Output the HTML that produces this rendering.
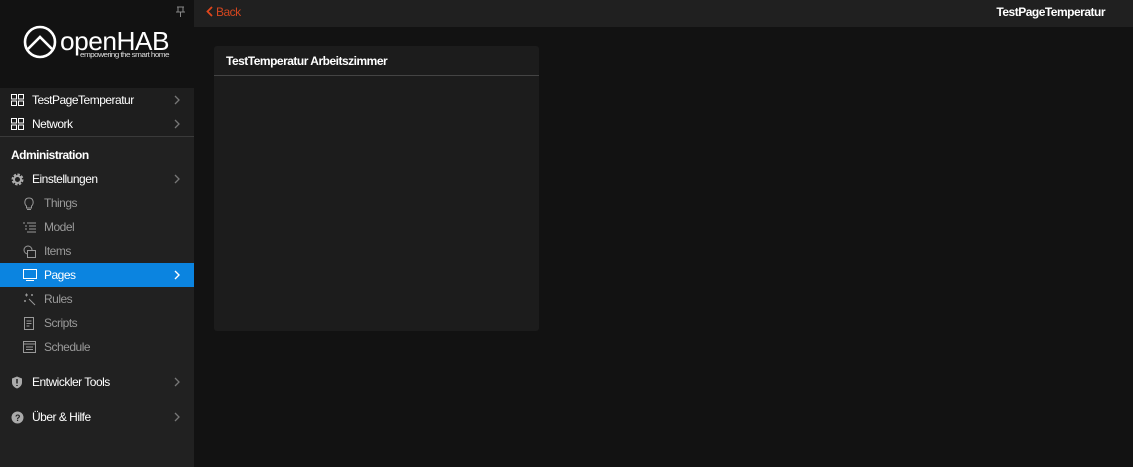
<!DOCTYPE html>
<html><head><meta charset="utf-8"><style>
*{margin:0;padding:0;box-sizing:border-box}
body{width:1133px;height:467px;background:#121212;font-family:"Liberation Sans",sans-serif;font-size:12px;color:#fff;position:relative;overflow:hidden;letter-spacing:-0.5px}
#side{position:absolute;left:0;top:0;width:194px;height:467px;background:#212121}
#logo{position:absolute;left:0;top:0;width:194px;height:88px;background:#121212}
.row{position:absolute;left:0;width:194px;height:24px;line-height:24px}
.row .t{position:absolute;left:32px;top:0}
.row .ic{position:absolute;left:11px;top:6px}
.sub .t{left:44px;color:#9a9a9a}
.sub .ic{left:23px}
.chev{position:absolute;left:174px;top:7px}
.line{position:absolute;left:0;width:194px;height:1px;background:#3a3a3a}
#nav{position:absolute;left:194px;top:0;width:939px;height:27px;background:#202020}
#card{position:absolute;left:214px;top:46px;width:325px;height:285px;background:#1c1c1c;border-radius:3px}
#card .h{height:30px;line-height:30px;padding-left:12px;font-weight:bold;font-size:12px;border-bottom:1px solid #444}
</style></head><body>
<div id="side">
<div id="logo">
<svg style="position:absolute;left:0;top:0" width="194" height="88">
<circle cx="40" cy="42" r="15" fill="none" stroke="#fff" stroke-width="2.6"/>
<path d="M28 49 L40 37 L52 49" fill="none" stroke="#fff" stroke-width="2.6"/>
<text x="60" y="50" fill="#fff" font-family="Liberation Sans" font-size="26" textLength="109" lengthAdjust="spacingAndGlyphs">openHAB</text>
<text x="80" y="57" fill="#ddd" font-family="Liberation Sans" font-size="7" textLength="89" lengthAdjust="spacingAndGlyphs">empowering the smart home</text>
<path d="M177 7h7M178 7v5M183 7v5M176 12h9M180.5 12v5" stroke="#888" stroke-width="1" fill="none"/>
</svg>
</div>
<div class="line" style="top:88px"></div>
<div class="row" style="top:88px;background:#1e1e1e"><svg class="ic" width="13" height="12"><rect x="0.5" y="0.5" width="5" height="4.5" fill="none" stroke="#fff"/><rect x="7.5" y="0.5" width="5" height="4.5" fill="none" stroke="#fff"/><rect x="0.5" y="7" width="5" height="4.5" fill="none" stroke="#fff"/><rect x="7.5" y="7" width="5" height="4.5" fill="none" stroke="#fff"/></svg><span class="t">TestPageTemperatur</span><svg class="chev" width="6" height="10"><path d="M1 1l4 4-4 4" stroke="#777" stroke-width="1.3" fill="none"/></svg></div>
<div class="line" style="top:112px;left:32px;width:162px"></div>
<div class="row" style="top:112px;background:#1e1e1e"><svg class="ic" width="13" height="12"><rect x="0.5" y="0.5" width="5" height="4.5" fill="none" stroke="#fff"/><rect x="7.5" y="0.5" width="5" height="4.5" fill="none" stroke="#fff"/><rect x="0.5" y="7" width="5" height="4.5" fill="none" stroke="#fff"/><rect x="7.5" y="7" width="5" height="4.5" fill="none" stroke="#fff"/></svg><span class="t">Network</span><svg class="chev" width="6" height="10"><path d="M1 1l4 4-4 4" stroke="#777" stroke-width="1.3" fill="none"/></svg></div>
<div class="line" style="top:136px"></div>
<div class="row" style="top:143px"><span class="t" style="left:11px;font-weight:bold">Administration</span></div>
<div class="row" style="top:167px"><svg class="ic" width="13" height="13"><circle cx="6.5" cy="6.5" r="4.5" fill="none" stroke="#aaa" stroke-width="3" stroke-dasharray="2.2 1.3"/><circle cx="6.5" cy="6.5" r="3.5" fill="none" stroke="#aaa" stroke-width="2"/></svg><span class="t">Einstellungen</span><svg class="chev" width="6" height="10"><path d="M1 1l4 4-4 4" stroke="#777" stroke-width="1.3" fill="none"/></svg></div>
<div class="row sub" style="top:191px"><svg class="ic" width="12" height="14"><path d="M3.5 9C1 7 1 1 6 1s5 6 2.5 8v2h-5z M4 12.5h4" stroke="#999" fill="none"/></svg><span class="t">Things</span></div>
<div class="row sub" style="top:215px"><svg class="ic" width="14" height="12"><path d="M0 2h2M4 2h9M2 5h2M6 5h7M2 8h2M6 8h7M4 11h9" stroke="#999" fill="none"/></svg><span class="t">Model</span></div>
<div class="row sub" style="top:239px"><svg class="ic" width="14" height="14"><circle cx="5" cy="5" r="4" fill="none" stroke="#999"/><rect x="4.5" y="5.5" width="8" height="7" fill="#212121" stroke="#999"/></svg><span class="t">Items</span></div>
<div class="row sub" style="top:263px;background:#0b84e0"><svg class="ic" width="14" height="12"><rect x="0.5" y="0.5" width="13" height="9" fill="none" stroke="#fff"/><path d="M3 11.5h8" stroke="#fff"/></svg><span class="t" style="color:#fff">Pages</span><svg class="chev" width="6" height="10"><path d="M1 1l4 4-4 4" stroke="#fff" stroke-width="1.4" fill="none"/></svg></div>
<div class="row sub" style="top:287px"><svg class="ic" width="14" height="13"><path d="M6 6l6 6M2 2h3M3.5 .5v3M9 1v2M8 2h2M1 8h2M2 7v2" stroke="#999" fill="none"/></svg><span class="t">Rules</span></div>
<div class="row sub" style="top:311px"><svg class="ic" width="12" height="14"><rect x="1.5" y="0.5" width="9" height="12" fill="none" stroke="#999"/><path d="M3.5 4h5M3.5 6.5h5M3.5 9h3" stroke="#999"/></svg><span class="t">Scripts</span></div>
<div class="row sub" style="top:335px"><svg class="ic" width="14" height="13"><rect x="0.5" y="0.5" width="12" height="11" fill="none" stroke="#999"/><path d="M0.5 3h12M3 6h7M3 8.5h7" stroke="#999"/></svg><span class="t">Schedule</span></div>
<div class="row" style="top:370px"><svg class="ic" width="12" height="13"><path d="M6 0.5L11 2.5v4c0 3-2.5 5-5 6-2.5-1-5-3-5-6v-4z" fill="#aaa"/><path d="M6 3v4.5M6 9v1" stroke="#212121" stroke-width="1.5"/></svg><span class="t">Entwickler Tools</span><svg class="chev" width="6" height="10"><path d="M1 1l4 4-4 4" stroke="#777" stroke-width="1.3" fill="none"/></svg></div>
<div class="row" style="top:405px"><svg class="ic" width="13" height="13"><circle cx="6.5" cy="6.5" r="6" fill="#aaa"/><text x="6.5" y="10" font-size="9" font-weight="bold" text-anchor="middle" fill="#212121" font-family="Liberation Sans">?</text></svg><span class="t">Über &amp; Hilfe</span><svg class="chev" width="6" height="10"><path d="M1 1l4 4-4 4" stroke="#777" stroke-width="1.3" fill="none"/></svg></div>
</div>
<div id="nav">
<svg style="position:absolute;left:12px;top:6px" width="8" height="12"><path d="M6 1L1.5 5.5 6 10" stroke="#e0461c" stroke-width="1.8" fill="none"/></svg>
<span style="position:absolute;left:22px;top:5px;color:#d4461f;font-size:12px">Back</span>
<span style="position:absolute;right:28px;top:5px;font-weight:bold;font-size:12px">TestPageTemperatur</span>
</div>
<div id="card"><div class="h">TestTemperatur Arbeitszimmer</div></div>
</body></html>
